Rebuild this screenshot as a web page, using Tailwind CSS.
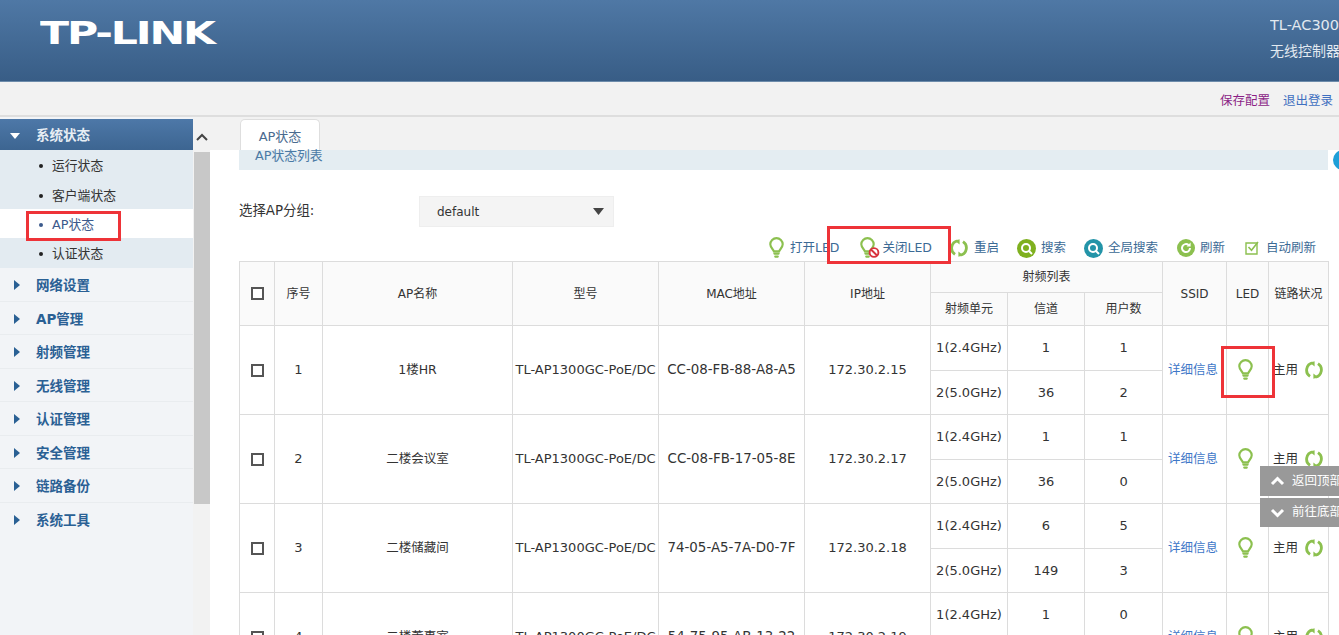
<!DOCTYPE html>
<html>

<head>
  <meta charset="UTF-8" />
  <script src="https://cdn.jsdelivr.net/npm/@tailwindcss/browser@4"></script>
  <title>TP-LINK</title>
</head>

<body class="relative h-[635px] overflow-hidden bg-white text-[12.5px] text-[#333] font-['DejaVu_Sans','Noto_Sans_CJK_SC',sans-serif]">
  <svg class="hidden">
    <symbol id="bulb" viewBox="0 0 14 20">
      <path d="M4.6 13.2C4.2 11.2 1.2 9.8 1.2 6.6a5.8 5.8 0 0 1 11.6 0c0 3.2-3 4.6-3.4 6.6z" fill="none" stroke="#8cc04f" stroke-width="2" />
      <path d="M5 15.2h4M5.8 18h2.4" fill="none" stroke="#8cc04f" stroke-width="2" stroke-linecap="round" />
    </symbol>
    <symbol id="reboot" viewBox="0 0 18 18">
      <path d="M7.6 1.8A7.5 7.5 0 0 0 5 15.4M10.4 16.2A7.5 7.5 0 0 0 13 2.6" fill="none" stroke="#8cc04f" stroke-width="2.8" />
      <path d="M5 1.8l4.6-1.6v5.2zM13 16.2l-4.6 1.6v-5.2z" fill="#8cc04f" />
    </symbol>
  </svg>

  <header class="h-[82px] flex justify-between bg-gradient-to-b from-[#4f78a5] to-[#385d86] border-b border-[#6d8cab]">
    <div class="ml-[40px] mt-[15px] h-[36px] origin-left scale-x-[1.33] text-[32px] leading-[36px] font-bold tracking-[-1.6px] text-white font-['DejaVu_Sans',sans-serif]">TP-LINK</div>
    <div class="w-[69px] overflow-hidden whitespace-nowrap pt-[15px] text-[#e2e9f0]">
      <div class="h-[20px] leading-[20px] text-[14.5px]">TL-AC3000</div>
      <div class="mt-[6px] h-[20px] leading-[20px] text-[14px]">无线控制器</div>
    </div>
  </header>

  <div class="h-[35px] flex items-center justify-end gap-[13px] pr-[6px] pt-[6px] bg-[#f2f2f2] border-b-2 border-[#dedede]">
    <a class="text-[#8c1f86]">保存配置</a>
    <a class="text-[#3f6fc0]">退出登录</a>
  </div>

  <div class="flex h-[518px]">
    <aside class="w-[193px] shrink-0 pt-[2px] bg-[#f2f4f7]">
      <div class="h-[31px] pt-[2px] flex items-center bg-gradient-to-b from-[#4d78a8] to-[#3d6591] text-[13.5px] font-bold text-[#e8eef4]">
        <svg class="ml-[10px] w-[10px] h-[6px]" viewBox="0 0 10 6"><path d="M0 0h10L5 6z" fill="#fff" /></svg>
        <span class="ml-[16px]">系统状态</span>
      </div>
      <ul class="bg-[#e3ebf1] text-[12.8px] [&>li]:pt-[2px]">
        <li class="h-[30px] flex items-center pl-[39px] gap-[9px]"><i class="w-[4px] h-[4px] rounded-full bg-[#222]"></i>运行状态</li>
        <li class="h-[29px] flex items-center pl-[39px] gap-[9px]"><i class="w-[4px] h-[4px] rounded-full bg-[#222]"></i>客户端状态</li>
        <li class="h-[29px] flex items-center pl-[39px] gap-[9px] bg-white text-[#3c5a8c]"><i class="w-[4px] h-[4px] rounded-full bg-[#3c5a8c]"></i>AP状态</li>
        <li class="h-[30px] flex items-center pl-[39px] gap-[9px]"><i class="w-[4px] h-[4px] rounded-full bg-[#222]"></i>认证状态</li>
      </ul>
      <ul class="text-[13.5px] font-bold text-[#2a6094] [&>li]:pt-[2px]">
        <li class="h-[33.5px] flex items-center pl-[14px] gap-[16px] border-b border-[#e9ecef]"><svg class="w-[6px] h-[10px]" viewBox="0 0 6 10"><path d="M0 0l6 5-6 5z" fill="#2a6094" /></svg>网络设置</li>
        <li class="h-[33.5px] flex items-center pl-[14px] gap-[16px] border-b border-[#e9ecef]"><svg class="w-[6px] h-[10px]" viewBox="0 0 6 10"><path d="M0 0l6 5-6 5z" fill="#2a6094" /></svg>AP管理</li>
        <li class="h-[33.5px] flex items-center pl-[14px] gap-[16px] border-b border-[#e9ecef]"><svg class="w-[6px] h-[10px]" viewBox="0 0 6 10"><path d="M0 0l6 5-6 5z" fill="#2a6094" /></svg>射频管理</li>
        <li class="h-[33.5px] flex items-center pl-[14px] gap-[16px] border-b border-[#e9ecef]"><svg class="w-[6px] h-[10px]" viewBox="0 0 6 10"><path d="M0 0l6 5-6 5z" fill="#2a6094" /></svg>无线管理</li>
        <li class="h-[33.5px] flex items-center pl-[14px] gap-[16px] border-b border-[#e9ecef]"><svg class="w-[6px] h-[10px]" viewBox="0 0 6 10"><path d="M0 0l6 5-6 5z" fill="#2a6094" /></svg>认证管理</li>
        <li class="h-[33.5px] flex items-center pl-[14px] gap-[16px] border-b border-[#e9ecef]"><svg class="w-[6px] h-[10px]" viewBox="0 0 6 10"><path d="M0 0l6 5-6 5z" fill="#2a6094" /></svg>安全管理</li>
        <li class="h-[33.5px] flex items-center pl-[14px] gap-[16px] border-b border-[#e9ecef]"><svg class="w-[6px] h-[10px]" viewBox="0 0 6 10"><path d="M0 0l6 5-6 5z" fill="#2a6094" /></svg>链路备份</li>
        <li class="h-[33.5px] flex items-center pl-[14px] gap-[16px]"><svg class="w-[6px] h-[10px]" viewBox="0 0 6 10"><path d="M0 0l6 5-6 5z" fill="#2a6094" /></svg>系统工具</li>
      </ul>
    </aside>

    <div class="w-[17px] shrink-0 bg-[#f2f2f2]">
      <div class="h-[35px] flex items-center justify-center pt-[5px]">
        <svg class="w-[12px] h-[8px]" viewBox="0 0 12 8"><path d="M1 7l5-5 5 5" fill="none" stroke="#444" stroke-width="2" /></svg>
      </div>
      <div class="h-[352px] ml-[1px] bg-[#c8c8c8]"></div>
    </div>

    <main class="flex-1 min-w-0">
      <div class="h-[33px] pl-[30px] pt-[2px] flex items-end bg-[#f2f2f2]">
        <div class="w-[80px] h-[31px] pt-[7px] text-center text-[13px] rounded-t-[5px] bg-white border border-b-0 border-[#dedede] text-[#4a6b8f]">AP状态</div>
      </div>
      <div class="pl-[29px] pr-[11px]">
        <div class="h-[20px] pl-[16px] leading-[11px] text-[12.8px] bg-[#e4edf2] text-[#4a7aa5]">AP状态列表</div>
        <div class="mt-[26px] h-[31px] flex items-center">
          <span class="w-[180px] text-[13.4px]">选择AP分组:</span>
          <div class="w-[195px] h-[31px] flex items-center justify-between pl-[17px] pr-[9px] text-[12px] bg-[#f4f4f4] border border-[#eeeeee]">
            <span>default</span>
            <svg class="w-[11px] h-[7px]" viewBox="0 0 11 7"><path d="M0 0h11L5.5 7z" fill="#444" /></svg>
          </div>
        </div>
        <div class="h-[28px] mt-[6px] pt-[2px] flex items-center justify-end gap-[18px] pr-[12px] text-[#3b6a95]">
          <span class="flex items-center gap-[6px]"><svg class="w-[15px] h-[22px]"><use href="#bulb" /></svg>打开LED</span>
          <span class="flex items-center gap-[2px] ml-[3px]">
            <svg class="w-[20px] h-[22px]" viewBox="0 0 20 22"><use href="#bulb" width="15" height="22" /><circle cx="14" cy="15.5" r="4.4" fill="#fff" stroke="#d8323c" stroke-width="1.9" /><path d="M11 12.5l6 6" stroke="#d8323c" stroke-width="1.9" /></svg>关闭LED</span>
          <span class="flex items-center gap-[6px]"><svg class="w-[18px] h-[18px]"><use href="#reboot" /></svg>重启</span>
          <span class="flex items-center gap-[5px]">
            <svg class="w-[19px] h-[19px]" viewBox="0 0 19 19"><circle cx="9.5" cy="9.5" r="9.5" fill="#7fb01f" /><circle cx="9" cy="9" r="4" fill="none" stroke="#fff" stroke-width="2" /><path d="M12 12l3 3" stroke="#fff" stroke-width="2" /></svg>搜索</span>
          <span class="flex items-center gap-[5px] mr-[1px]">
            <svg class="w-[19px] h-[19px]" viewBox="0 0 19 19"><circle cx="9.5" cy="9.5" r="9.5" fill="#2394a8" /><circle cx="9" cy="9" r="4" fill="none" stroke="#fff" stroke-width="2" /><path d="M12 12l3 3" stroke="#fff" stroke-width="2" /></svg>全局搜索</span>
          <span class="flex items-center gap-[5px]">
            <svg class="w-[18px] h-[18px]" viewBox="0 0 18 18"><circle cx="9" cy="9" r="9" fill="#8cc04f" /><path d="M13 9a4 4 0 1 1-1.4-3" fill="none" stroke="#fff" stroke-width="2" /><path d="M13.6 3.4v4h-4z" fill="#fff" /></svg>刷新</span>
          <span class="flex items-center gap-[7px] ml-[2px]">
            <svg class="w-[14px] h-[14px]" viewBox="0 0 14 14"><path d="M1 2h11v11H1z" fill="none" stroke="#8cc04f" stroke-width="1.4" /><path d="M3.5 6l3 3.2L13 1" fill="none" stroke="#8cc04f" stroke-width="1.6" /></svg>自动刷新</span>
        </div>

        <table class="w-[1089px] table-fixed border-collapse text-center text-[13px] [&_td]:border [&_td]:border-[#dcdcdc] [&_th]:border [&_th]:border-[#dcdcdc] [&_th]:font-normal [&_th]:text-[12px] [&_th]:bg-[#fafafa]">
          <colgroup>
            <col class="w-[35px]" /><col class="w-[48px]" /><col class="w-[190px]" /><col class="w-[146px]" /><col class="w-[146px]" /><col class="w-[126px]" /><col class="w-[77px]" /><col class="w-[77px]" /><col class="w-[78px]" /><col class="w-[64px]" /><col class="w-[42px]" /><col class="w-[60px]" />
          </colgroup>
          <thead>
            <tr class="h-[31px]">
              <th rowspan="2"><input type="checkbox" class="block mx-auto w-[13px] h-[13px] appearance-none border-2 border-[#555] bg-white" /></th>
              <th rowspan="2">序号</th>
              <th rowspan="2">AP名称</th>
              <th rowspan="2">型号</th>
              <th rowspan="2">MAC地址</th>
              <th rowspan="2">IP地址</th>
              <th colspan="3">射频列表</th>
              <th rowspan="2">SSID</th>
              <th rowspan="2">LED</th>
              <th rowspan="2">链路状况</th>
            </tr>
            <tr class="h-[33px]"><th>射频单元</th><th>信道</th><th>用户数</th></tr>
          </thead>
          <tbody>
            <tr class="h-[44.5px]">
              <td rowspan="2"><input type="checkbox" class="block mx-auto w-[13px] h-[13px] appearance-none border-2 border-[#555] bg-white" /></td>
              <td rowspan="2">1</td><td rowspan="2" class="text-[12.5px]">1楼HR</td><td rowspan="2">TL-AP1300GC-PoE/DC</td><td rowspan="2" class="text-[13.4px]">CC-08-FB-88-A8-A5</td><td rowspan="2">172.30.2.15</td>
              <td>1(2.4GHz)</td><td>1</td><td>1</td>
              <td rowspan="2" class="text-[12.5px] text-[#3f78c8] pr-[3px]">详细信息</td>
              <td rowspan="2" class="pr-[4px]"><svg class="mx-auto w-[15px] h-[22px]"><use href="#bulb" /></svg></td>
              <td rowspan="2"><span class="flex items-center justify-center gap-[7px] pr-[1px] text-[12.5px]">主用<svg class="w-[18px] h-[18px]"><use href="#reboot" /></svg></span></td>
            </tr>
            <tr class="h-[44.5px]"><td>2(5.0GHz)</td><td>36</td><td>2</td></tr>
            <tr class="h-[44.5px]">
              <td rowspan="2"><input type="checkbox" class="block mx-auto w-[13px] h-[13px] appearance-none border-2 border-[#555] bg-white" /></td>
              <td rowspan="2">2</td><td rowspan="2" class="text-[12.5px]">二楼会议室</td><td rowspan="2">TL-AP1300GC-PoE/DC</td><td rowspan="2" class="text-[13.4px]">CC-08-FB-17-05-8E</td><td rowspan="2">172.30.2.17</td>
              <td>1(2.4GHz)</td><td>1</td><td>1</td>
              <td rowspan="2" class="text-[12.5px] text-[#3f78c8] pr-[3px]">详细信息</td>
              <td rowspan="2" class="pr-[4px]"><svg class="mx-auto w-[15px] h-[22px]"><use href="#bulb" /></svg></td>
              <td rowspan="2"><span class="flex items-center justify-center gap-[7px] pr-[1px] text-[12.5px]">主用<svg class="w-[18px] h-[18px]"><use href="#reboot" /></svg></span></td>
            </tr>
            <tr class="h-[44.5px]"><td>2(5.0GHz)</td><td>36</td><td>0</td></tr>
            <tr class="h-[44.5px]">
              <td rowspan="2"><input type="checkbox" class="block mx-auto w-[13px] h-[13px] appearance-none border-2 border-[#555] bg-white" /></td>
              <td rowspan="2">3</td><td rowspan="2" class="text-[12.5px]">二楼储藏间</td><td rowspan="2">TL-AP1300GC-PoE/DC</td><td rowspan="2" class="text-[13.4px]">74-05-A5-7A-D0-7F</td><td rowspan="2">172.30.2.18</td>
              <td>1(2.4GHz)</td><td>6</td><td>5</td>
              <td rowspan="2" class="text-[12.5px] text-[#3f78c8] pr-[3px]">详细信息</td>
              <td rowspan="2" class="pr-[4px]"><svg class="mx-auto w-[15px] h-[22px]"><use href="#bulb" /></svg></td>
              <td rowspan="2"><span class="flex items-center justify-center gap-[7px] pr-[1px] text-[12.5px]">主用<svg class="w-[18px] h-[18px]"><use href="#reboot" /></svg></span></td>
            </tr>
            <tr class="h-[44.5px]"><td>2(5.0GHz)</td><td>149</td><td>3</td></tr>
            <tr class="h-[44.5px]">
              <td rowspan="2"><input type="checkbox" class="block mx-auto w-[13px] h-[13px] appearance-none border-2 border-[#555] bg-white" /></td>
              <td rowspan="2">4</td><td rowspan="2" class="text-[12.5px]">二楼董事室</td><td rowspan="2">TL-AP1300GC-PoE/DC</td><td rowspan="2" class="text-[13.4px]">54-75-95-AB-13-22</td><td rowspan="2">172.30.2.19</td>
              <td>1(2.4GHz)</td><td>1</td><td>0</td>
              <td rowspan="2" class="text-[12.5px] text-[#3f78c8] pr-[3px]">详细信息</td>
              <td rowspan="2" class="pr-[4px]"><svg class="mx-auto w-[15px] h-[22px]"><use href="#bulb" /></svg></td>
              <td rowspan="2"><span class="flex items-center justify-center gap-[7px] pr-[1px] text-[12.5px]">主用<svg class="w-[18px] h-[18px]"><use href="#reboot" /></svg></span></td>
            </tr>
            <tr class="h-[44.5px]"><td>2(5.0GHz)</td><td>36</td><td>0</td></tr>
          </tbody>
        </table>
      </div>
    </main>
  </div>

  <!-- floating bits and the red annotations drawn over the page -->
  <div class="absolute left-[1333px] top-[150px] w-[20px] h-[20px] rounded-full bg-[#1e9fd8]"></div>
  <div class="absolute left-[1260px] top-[466px] w-[79px] h-[30px] flex items-center pl-[10px] gap-[7px] overflow-hidden whitespace-nowrap bg-[#999] text-white">
    <svg class="shrink-0 w-[15px] h-[10px]" viewBox="0 0 15 10"><path d="M2 8l5.5-5.5L13 8" fill="none" stroke="#fff" stroke-width="3" /></svg>返回顶部
  </div>
  <div class="absolute left-[1260px] top-[498px] w-[79px] h-[29px] flex items-center pl-[10px] gap-[7px] overflow-hidden whitespace-nowrap bg-[#999] text-white">
    <svg class="shrink-0 w-[15px] h-[10px]" viewBox="0 0 15 10"><path d="M2 2l5.5 5.5L13 2" fill="none" stroke="#fff" stroke-width="3" /></svg>前往底部
  </div>
  <div class="absolute left-[26px] top-[211px] w-[95px] h-[30px] border-[3px] border-[#ee3338]"></div>
  <div class="absolute left-[827px] top-[226px] w-[124px] h-[38px] border-[3px] border-[#ee3338]"></div>
  <div class="absolute left-[1221px] top-[346px] w-[54px] h-[52px] border-[3px] border-[#ee3338]"></div>
</body>

</html>
